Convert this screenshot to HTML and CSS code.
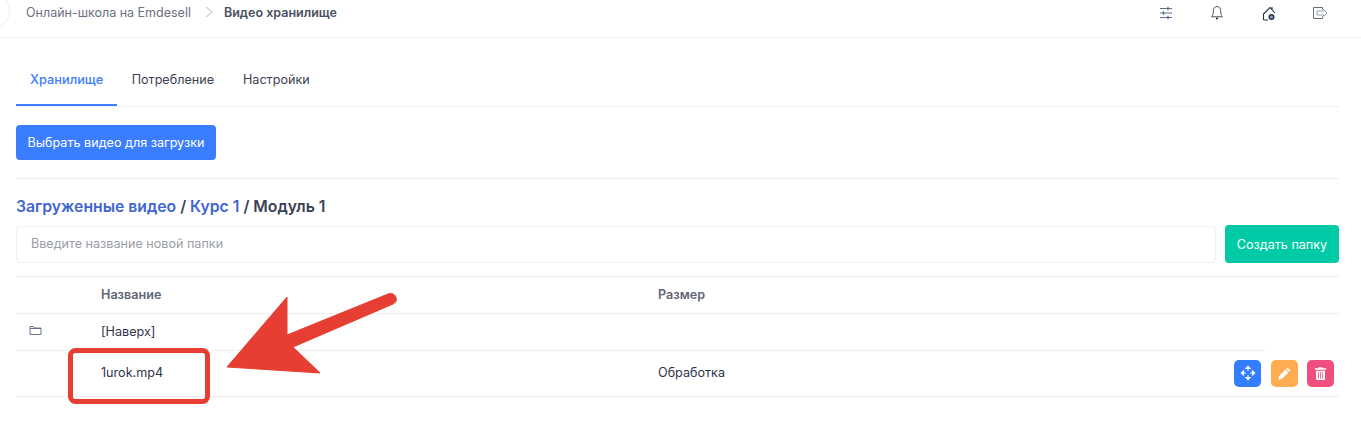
FILE: index.html
```html
<!DOCTYPE html>
<html lang="ru">
  <head>
    <meta charset="UTF-8" />
    <meta name="viewport" content="width=device-width, initial-scale=1.0" />
    <title>Видео хранилище</title>
    <link rel="stylesheet" href="styles.css">
  </head>
  <body>
    <header class="topbar">
      <div class="toggle"></div>
      <nav class="crumbs">
        <a class="crumb">Онлайн-школа на Emdesell</a>
        <svg class="crumb_sep" width="8" height="12" viewBox="0 0 8 12"><path d="M1 1l6 5-6 5" fill="none" stroke="#b4b8c0" stroke-width="1"/></svg>
        <b class="crumb_now">Видео хранилище</b>
      </nav>
      <div class="topicons">
        <svg width="16" height="16" viewBox="0 0 16 16" fill="none" stroke="#666e7c" stroke-width="1"><path d="M2 3.500h12M2 8h12M2 12.500h12"/><path d="M10 1.800v3.400M5.500 6.300v3.400M10 10.800v3.400" stroke="#3f6fb0" stroke-width="1.300"/></svg>
        <svg width="16" height="16" viewBox="0 0 16 16" fill="none" stroke="#4a5262" stroke-width="1"><path d="M8 1.500c-2.600 0-3.700 2-3.700 4.300 0 3-.6 4.600-1.600 6h10.600c-1-1.400-1.600-3-1.600-6 0-2.300-1.100-4.300-3.700-4.300z"/><path d="M7 13.500h2" stroke="#1f2533" stroke-width="1.600"/></svg>
        <svg width="16" height="16" viewBox="0 0 16 16" fill="none" stroke="#2b3446" stroke-width="1.100"><path d="M3.500 15V9L3 9.500M3 9.500L10 2.500l5 5.500M12 4.800V2M3.500 15H8"/><circle cx="11.500" cy="12" r="2.300" fill="#8fa3c0" stroke-width="1.500"/></svg>
        <svg width="18" height="16" viewBox="0 0 18 16" fill="none" stroke="#666e7c" stroke-width="1"><path d="M11.500 4.500V2.500H2.500v11h9v-2"/><path d="M6 6h6.500V4.500L16 8l-3.500 3.500V10H6z" stroke="#9aa0aa"/></svg>
      </div>
    </header>

    <main class="content">
      <div class="tabs">
        <a class="tab tab_active">Хранилище</a>
        <a class="tab">Потребление</a>
        <a class="tab">Настройки</a>
      </div>

      <div class="upload">
        <button class="btn btn_blue">Выбрать видео для загрузки</button>
      </div>

      <h2 class="path">
        <a>Загруженные видео</a> <span>/</span> <a>Курс 1</a> <span>/ Модуль 1</span>
      </h2>

      <div class="newfolder">
        <input class="newfolder_input" type="text" placeholder="Введите название новой папки" />
        <button class="btn btn_green">Создать папку</button>
      </div>

      <table class="files">
        <thead>
          <tr>
            <th class="col_icon"></th>
            <th class="col_name">Название</th>
            <th>Размер</th>
            <th class="col_actions"></th>
          </tr>
        </thead>
        <tbody>
          <tr class="row_up">
            <td>
              <svg class="folder" width="13" height="11" viewBox="0 0 13 11" fill="none" stroke="#5a6484" stroke-width=".9"><path d="M1 9.500V1.500h3.500l1 1.500h6.500v6.500z"/><path d="M1 3.500h11"/></svg>
            </td>
            <td class="cell_up">[Наверх]</td>
            <td></td>
            <td class="cell_blank"></td>
          </tr>
          <tr class="row_file">
            <td></td>
            <td><span class="cell_raised">1urok.mp4</span></td>
            <td><span class="cell_raised">Обработка</span></td>
            <td>
              <div class="actions">
                <button class="act act_blue">
                  <svg width="16" height="16" viewBox="0 0 16 16" fill="none" stroke="#fff" stroke-width="1.100"><path d="M8 1.500v4.500M8 10v4.500M1.500 8H6M10 8h4.500"/><path d="M6 3.400L8 1.400l2 2zM6 12.600l2 2 2-2zM3.400 6l-2 2 2 2zM12.600 6l2 2-2 2z" fill="#fff"/></svg>
                </button>
                <button class="act act_orange">
                  <svg width="15" height="15" viewBox="0 0 16 16" fill="#fff"><path d="M11.300 1.600l3.100 3.100-1.500 1.500-3.100-3.100zM9 3.800l3.100 3.100-6.800 6.800-4 1 1-4z"/></svg>
                </button>
                <button class="act act_pink">
                  <svg width="15" height="15" viewBox="0 0 16 16" fill="#fff"><path d="M2 2.500h12V4H2zM5.800 1.200h4.400v1.500H5.800zM3.200 5h9.600v9.200a.8.8 0 0 1-.8.800H4a.8.8 0 0 1-.8-.8z"/><path d="M5.800 6.500v7M8 6.500v7M10.200 6.500v7" stroke="#f04e7e" stroke-width=".9"/></svg>
                </button>
              </div>
            </td>
          </tr>
        </tbody>
      </table>
    </main>

    <svg class="callout" width="420" height="130" viewBox="0 0 420 130">
      <rect x="70.500" y="72.500" width="137" height="51" rx="5" fill="none" stroke="#e63e32" stroke-width="5"/>
      <path d="M287 19L227 89l93 6-27-26 100-43c7-3 2-13-5-10L287 57z" fill="#e63e32" stroke="#e63e32" stroke-linejoin="round"/>
    </svg>
  </body>
</html>
```

FILE: styles.css
```css
* {
  box-sizing: border-box;
}
html,
body {
  height: 100%;
}
body {
  margin: 0;
  position: relative;
  overflow: hidden;
  background-color: white;
  color: #2f3547;
  font-family: Inter, "Noto Sans", sans-serif;
  font-size: 12.600px;
}

/*topbar*/
.topbar {
  display: flex;
  align-items: flex-start;
  height: 38px;
  padding: 0 32px 0 0;
  border-bottom: 1px solid #f0f1f3;
}
.toggle {
  flex: none;
  width: 36px;
  height: 36px;
  margin: -7px 0 0 -26px;
  border: 1px solid #eeeff2;
  border-radius: 50%;
}
.crumbs {
  display: flex;
  align-items: center;
  height: 24px;
  margin-left: 16px;
  font-size: 12.500px;
}
.crumb {
  color: #6a7080;
}
.crumb_sep {
  margin: 0 11px 0 14px;
}
.crumb_now {
  color: #495060;
  font-weight: 600;
}
.topicons {
  display: flex;
  align-items: center;
  gap: 35px;
  height: 26px;
  margin-left: auto;
}

/*indhold*/
.content {
  padding: 0 22px 0 16px;
}
.tabs {
  display: flex;
  margin-top: 22px;
  border-bottom: 1px solid #eff0f3;
}
.tab {
  height: 46px;
  padding: 12px 14.500px 0;
  line-height: 16px;
  color: #3c4152;
}
.tab_active {
  padding: 12px 14px 0;
  color: #3f7cff;
  font-size: 12.800px;
  font-weight: 500;
  border-bottom: 2px solid #3f7cff;
}
.upload {
  padding: 18px 0;
  border-bottom: 1px solid #eceef1;
}
.btn {
  border: none;
  border-radius: 4px;
  color: white;
  font-family: inherit;
  font-size: 12.600px;
}
.btn_blue {
  display: block;
  width: 200px;
  height: 35px;
  background-color: #3b7dff;
}
.btn_green {
  width: 114px;
  height: 38px;
  background-color: #00cba6;
}
.path {
  margin: 18px 0 8px;
  font-size: 15.750px;
  line-height: 20px;
  font-weight: 600;
  color: #3a4256;
}
.path a {
  color: #3f66d0;
}
.newfolder {
  display: flex;
  align-items: center;
  gap: 9px;
}
.newfolder_input {
  width: 1200px;
  height: 37px;
  padding: 0 14px 2px;
  border: 1px solid #eff0f4;
  border-radius: 4px;
  font-family: inherit;
  font-size: 12.600px;
}
.newfolder_input::placeholder {
  color: #9a9ea6;
}

/*tabel*/
.files {
  width: 100%;
  margin-top: 13px;
  border-collapse: collapse;
  border-top: 1px solid #e9eaed;
}
.files th {
  height: 37px;
  padding: 0 0 2px;
  text-align: left;
  font-weight: 600;
  color: #5f6678;
  border-bottom: 1px solid #eceef2;
}
.files td {
  padding: 0;
  color: #2f3547;
}
.col_icon {
  width: 85px;
}
.col_name {
  width: 557px;
}
.col_actions {
  width: 200px;
}
.row_up td {
  height: 37px;
  border-bottom: 1px solid #eceef2;
}
.files .cell_up {
  padding-bottom: 2px;
}
.row_up .cell_blank {
  border-bottom: none;
  background-image: linear-gradient(#eceef2, #eceef2);
  background-size: 126px 1px;
  background-repeat: no-repeat;
  background-position: left bottom;
}
.row_file td {
  height: 46px;
  border-bottom: 1px solid #eceef2;
}
.cell_raised {
  display: block;
  margin-top: -2px;
}
.folder {
  display: block;
  margin: -3px 0 0 13px;
}
.actions {
  display: flex;
  justify-content: flex-end;
  gap: 9.500px;
  margin-right: 5px;
}
.act {
  display: flex;
  align-items: center;
  justify-content: center;
  width: 27px;
  height: 27px;
  padding: 0;
  border: none;
  border-radius: 5px;
}
.act_blue {
  background-color: #337dff;
}
.act_orange {
  background-color: #ffad50;
}
.act_pink {
  background-color: #f04e7e;
}

/*pil ovenpaa*/
.callout {
  position: absolute;
  left: 0;
  top: 278px;
  pointer-events: none;
}
```
